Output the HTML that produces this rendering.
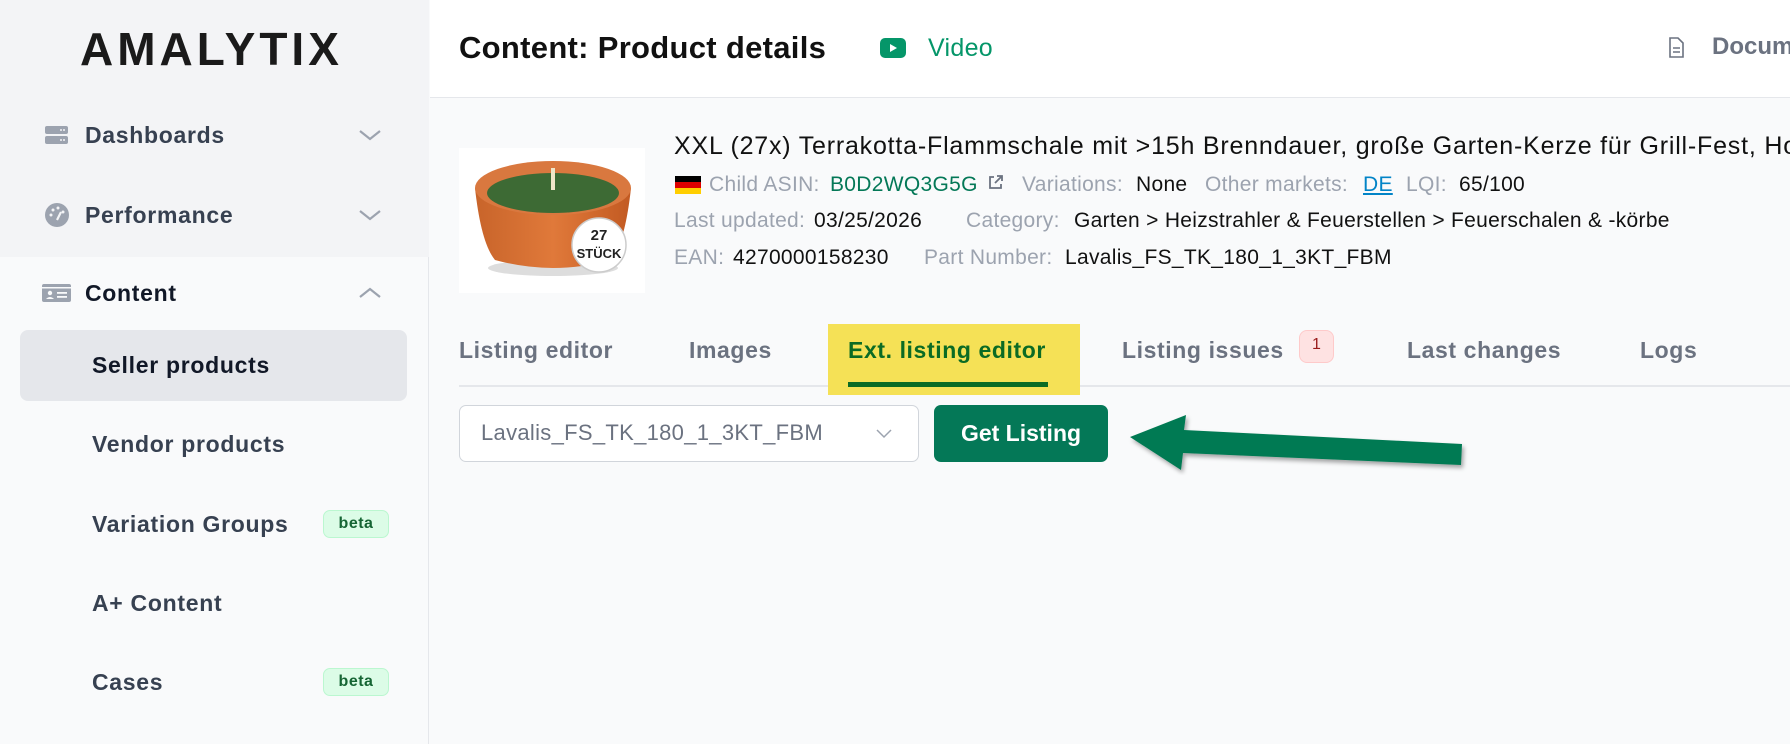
<!DOCTYPE html>
<html><head><meta charset="utf-8"><style>
*{margin:0;padding:0;box-sizing:border-box}
html,body{width:1790px;height:744px;overflow:hidden}
body{background:#f9fafb;font-family:"Liberation Sans",sans-serif;position:relative}
.abs{position:absolute}
#side{left:0;top:0;width:429px;height:744px;background:#f9fafb;border-right:1px solid #e5e7eb}
#sidetop{left:0;top:0;width:429px;height:257px;background:#f3f4f6}
.logo{left:80px;top:22px;font-size:46px;font-weight:700;letter-spacing:4px;color:#1a1a1a;line-height:54px}
.nav{font-size:23px;font-weight:600;letter-spacing:.7px;color:#374151;line-height:30px;left:85px}
.sub{font-size:23px;font-weight:600;letter-spacing:.7px;color:#374151;line-height:30px;left:92px}
.beta{left:323px;width:66px;height:28px;border:1px solid #bbf7d0;background:#dcfce7;border-radius:7px;color:#166534;font-size:16px;font-weight:600;text-align:center;line-height:26px;letter-spacing:.5px}
.m{position:absolute;font-size:21px;letter-spacing:.3px;white-space:nowrap;line-height:26px}
.g{color:#9ca3af}.k{color:#111}
.tab{top:336px;font-size:23px;font-weight:600;color:#6b7280;letter-spacing:.6px;white-space:nowrap;line-height:28px}
</style></head><body>
<div id="side" class="abs"></div>
<div id="sidetop" class="abs"></div>
<div class="abs logo">AMALYTIX</div>

<svg class="abs" style="left:45px;top:126px" width="24" height="18"><rect x="0" y="0" width="23" height="8" rx="2" fill="#9ca3af"/><rect x="0" y="10" width="23" height="8" rx="2" fill="#9ca3af"/><circle cx="16" cy="4" r="1" fill="#f3f4f6"/><circle cx="19" cy="4" r="1" fill="#f3f4f6"/><circle cx="16" cy="14" r="1" fill="#f3f4f6"/><circle cx="19" cy="14" r="1" fill="#f3f4f6"/></svg>
<div class="abs nav" style="top:120px">Dashboards</div>
<svg class="abs" style="left:358px;top:128px" width="24" height="14"><path d="M2 3 L12 11 L22 3" stroke="#9ca3af" stroke-width="2.2" fill="none"/></svg>

<svg class="abs" style="left:44px;top:202px" width="26" height="26"><circle cx="13" cy="13" r="12" fill="#9ca3af"/><circle cx="7" cy="13" r="1.5" fill="#f3f4f6"/><circle cx="9" cy="8" r="1.5" fill="#f3f4f6"/><circle cx="14" cy="6" r="1.5" fill="#f3f4f6"/><circle cx="19" cy="10" r="1.5" fill="#f3f4f6"/><path d="M13 18 L17 10" stroke="#f3f4f6" stroke-width="2.2"/></svg>
<div class="abs nav" style="top:200px">Performance</div>
<svg class="abs" style="left:358px;top:208px" width="24" height="14"><path d="M2 3 L12 11 L22 3" stroke="#9ca3af" stroke-width="2.2" fill="none"/></svg>

<svg class="abs" style="left:42px;top:284px" width="30" height="19"><rect x="0" y="0" width="29" height="18" rx="2" fill="#9ca3af"/><rect x="0" y="3" width="29" height="1.5" fill="#f9fafb"/><circle cx="8" cy="9" r="2.2" fill="#f9fafb"/><path d="M4 15 Q8 11 12 15Z" fill="#f9fafb"/><rect x="15" y="8" width="10" height="1.8" fill="#f9fafb"/><rect x="15" y="12" width="10" height="1.8" fill="#f9fafb"/></svg>
<div class="abs nav" style="top:278px;color:#111827">Content</div>
<svg class="abs" style="left:358px;top:286px" width="24" height="14"><path d="M2 11 L12 3 L22 11" stroke="#9ca3af" stroke-width="2.2" fill="none"/></svg>

<div class="abs" style="left:20px;top:330px;width:387px;height:71px;background:#e5e7eb;border-radius:8px"></div>
<div class="abs sub" style="top:350px;color:#111827">Seller products</div>
<div class="abs sub" style="top:429px">Vendor products</div>
<div class="abs sub" style="top:509px">Variation Groups</div>
<div class="abs beta" style="top:510px">beta</div>
<div class="abs sub" style="top:588px">A+ Content</div>
<div class="abs sub" style="top:667px">Cases</div>
<div class="abs beta" style="top:668px">beta</div>

<!-- header -->
<div class="abs" style="left:430px;top:0;width:1360px;height:98px;background:#fff;border-bottom:1px solid #e5e7eb"></div>
<div class="abs" style="left:459px;top:29px;font-size:31px;font-weight:600;letter-spacing:.3px;color:#111;white-space:nowrap;line-height:38px">Content: Product details</div>
<svg class="abs" style="left:880px;top:38px" width="26" height="20"><rect x="0" y="0" width="26" height="20" rx="5" fill="#059669"/><path d="M10 6 L17 10 L10 14Z" fill="#fff"/></svg>
<div class="abs" style="left:928px;top:33px;font-size:25px;letter-spacing:.3px;color:#059669;line-height:30px">Video</div>
<svg class="abs" style="left:1668px;top:37px" width="16" height="21"><path d="M2 1 H10 L15 6 V20 H2Z" stroke="#6b7280" stroke-width="1.6" fill="none"/><path d="M5 11 H12 M5 15 H12" stroke="#6b7280" stroke-width="1.5"/></svg>
<div class="abs" style="left:1712px;top:33px;font-size:24px;font-weight:600;color:#6b7280;white-space:nowrap">Docum</div>

<!-- product image -->
<svg class="abs" style="left:459px;top:148px" width="186" height="145">
<rect width="186" height="145" fill="#fff"/>
<defs><linearGradient id="g" x1="0" x2="1"><stop offset="0" stop-color="#c8642a"/><stop offset=".5" stop-color="#e0793a"/><stop offset="1" stop-color="#c25a22"/></linearGradient></defs>
<ellipse cx="94" cy="120" rx="65" ry="8" fill="#ddd"/>
<path d="M16 40 Q22 95 36 112 Q94 128 152 112 Q166 95 172 40Z" fill="url(#g)"/>
<ellipse cx="94" cy="40" rx="78" ry="27" fill="#d9783f"/>
<ellipse cx="94" cy="45" rx="66" ry="20" fill="#3d6a34"/>
<rect x="92" y="20" width="4" height="22" fill="#efe6c8"/>
<circle cx="140" cy="97" r="27" fill="#fff" stroke="#ccc" stroke-width="1.5"/>
<text x="140" y="92" font-size="15" font-weight="700" text-anchor="middle" fill="#222" font-family="Liberation Sans">27</text>
<text x="140" y="110" font-size="13" font-weight="700" text-anchor="middle" fill="#222" font-family="Liberation Sans">STÜCK</text>
</svg>

<div class="abs" style="left:674px;top:131px;font-size:25px;letter-spacing:.8px;color:#111;white-space:nowrap;line-height:30px">XXL (27x) Terrakotta-Flammschale mit &gt;15h Brenndauer, große Garten-Kerze für Grill-Fest, Hochzeit</div>
<svg class="abs" style="left:675px;top:176px" width="26" height="18"><rect y="0" width="26" height="6" fill="#000"/><rect y="6" width="26" height="6" fill="#dd0000"/><rect y="12" width="26" height="6" fill="#ffce00"/></svg>
<div class="m g" style="left:709px;top:172px">Child ASIN:</div>
<div class="m" style="left:830px;top:172px;color:#047857">B0D2WQ3G5G</div>
<svg class="abs" style="left:988px;top:174px" width="16" height="16"><path d="M6 3 H2 V14 H13 V10 M9 2 H14 V7 M14 2 L7 9" stroke="#6b7280" stroke-width="1.8" fill="none"/></svg>
<div class="m g" style="left:1022px;top:172px">Variations:</div>
<div class="m k" style="left:1136px;top:172px">None</div>
<div class="m g" style="left:1205px;top:172px">Other markets:</div>
<div class="m" style="left:1363px;top:172px;color:#0284c7;text-decoration:underline">DE</div>
<div class="m g" style="left:1406px;top:172px">LQI:</div>
<div class="m k" style="left:1459px;top:172px">65/100</div>

<div class="m g" style="left:674px;top:208px">Last updated:</div>
<div class="m k" style="left:814px;top:208px">03/25/2026</div>
<div class="m g" style="left:966px;top:208px">Category:</div>
<div class="m k" style="left:1074px;top:208px">Garten &gt; Heizstrahler &amp; Feuerstellen &gt; Feuerschalen &amp; -körbe</div>

<div class="m g" style="left:674px;top:245px">EAN:</div>
<div class="m k" style="left:733px;top:245px">4270000158230</div>
<div class="m g" style="left:924px;top:245px">Part Number:</div>
<div class="m k" style="left:1065px;top:245px">Lavalis_FS_TK_180_1_3KT_FBM</div>

<!-- tabs -->
<div class="abs" style="left:459px;top:385px;width:1331px;height:2px;background:#e5e7eb"></div>
<div class="abs" style="left:828px;top:324px;width:252px;height:71px;background:#f5e156"></div>
<div class="abs" style="left:848px;top:382px;width:200px;height:5px;background:#0b6b24"></div>
<div class="abs tab" style="left:459px">Listing editor</div>
<div class="abs tab" style="left:689px">Images</div>
<div class="abs tab" style="left:848px;color:#0b6b24">Ext. listing editor</div>
<div class="abs tab" style="left:1122px">Listing issues</div>
<div class="abs" style="left:1299px;top:330px;width:35px;height:33px;background:#fee2e2;border:1px solid #fecaca;border-radius:8px;color:#991b1b;font-size:16px;text-align:center;line-height:28px">1</div>
<div class="abs tab" style="left:1407px">Last changes</div>
<div class="abs tab" style="left:1640px">Logs</div>

<div class="abs" style="left:459px;top:405px;width:460px;height:57px;background:#fff;border:1px solid #d1d5db;border-radius:7px"></div>
<div class="abs" style="left:481px;top:420px;font-size:22px;letter-spacing:.3px;color:#6b7280;white-space:nowrap">Lavalis_FS_TK_180_1_3KT_FBM</div>
<svg class="abs" style="left:875px;top:428px" width="18" height="12"><path d="M2 2 L9 9 L16 2" stroke="#9ca3af" stroke-width="1.5" fill="none"/></svg>
<div class="abs" style="left:934px;top:405px;width:174px;height:57px;background:#047857;border-radius:7px;color:#fff;font-size:23px;font-weight:600;text-align:center;line-height:57px">Get Listing</div>

<svg class="abs" style="left:1120px;top:405px" width="360" height="80">
<defs><filter id="s"><feDropShadow dx="2" dy="3" stdDeviation="2" flood-opacity=".35"/></filter></defs>
<path d="M10 32 L66 10 L64 25 L342 39 L341 60 L63 48 L61 65Z" fill="#067a52" filter="url(#s)"/>
</svg>
</body></html>
